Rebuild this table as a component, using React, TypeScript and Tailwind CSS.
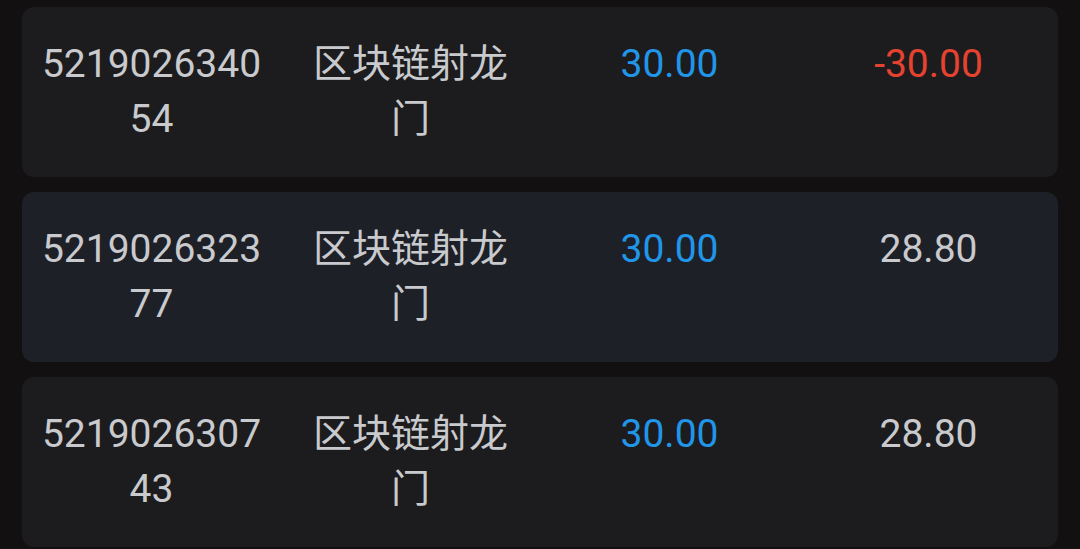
const rows = [
  { id: "521902634054", name: "区块链射龙门", amount: "30.00", result: "-30.00", loss: true, alt: false },
  { id: "521902632377", name: "区块链射龙门", amount: "30.00", result: "28.80", loss: false, alt: true },
  { id: "521902630743", name: "区块链射龙门", amount: "30.00", result: "28.80", loss: false, alt: false },
];

const font = { fontFamily: "Roboto, 'Noto Sans CJK SC', sans-serif" };

export default function App() {
  return (
    <div className="min-h-[549px] w-[1080px] bg-[#121010] px-[22px] pt-[7px] flex flex-col gap-[15px]" style={font}>
      {rows.map((r) => (
        <div
          key={r.id}
          className={
            "grid grid-cols-4 rounded-[12px] py-[30px] text-[39px] leading-[55px] text-center " +
            (r.alt ? "bg-[#1e2028]" : "bg-[#1c1c1e]")
          }
        >
          <div className="px-[16px] break-all text-[#c9cacd]">{r.id}</div>
          <div className="px-[16px] break-all text-[#c9cacd]">{r.name}</div>
          <div className="px-[16px] text-[#2196e8]">{r.amount}</div>
          <div className={"px-[16px] " + (r.loss ? "text-[#e5432f]" : "text-[#c9cacd]")}>{r.result}</div>
        </div>
      ))}
    </div>
  );
}
